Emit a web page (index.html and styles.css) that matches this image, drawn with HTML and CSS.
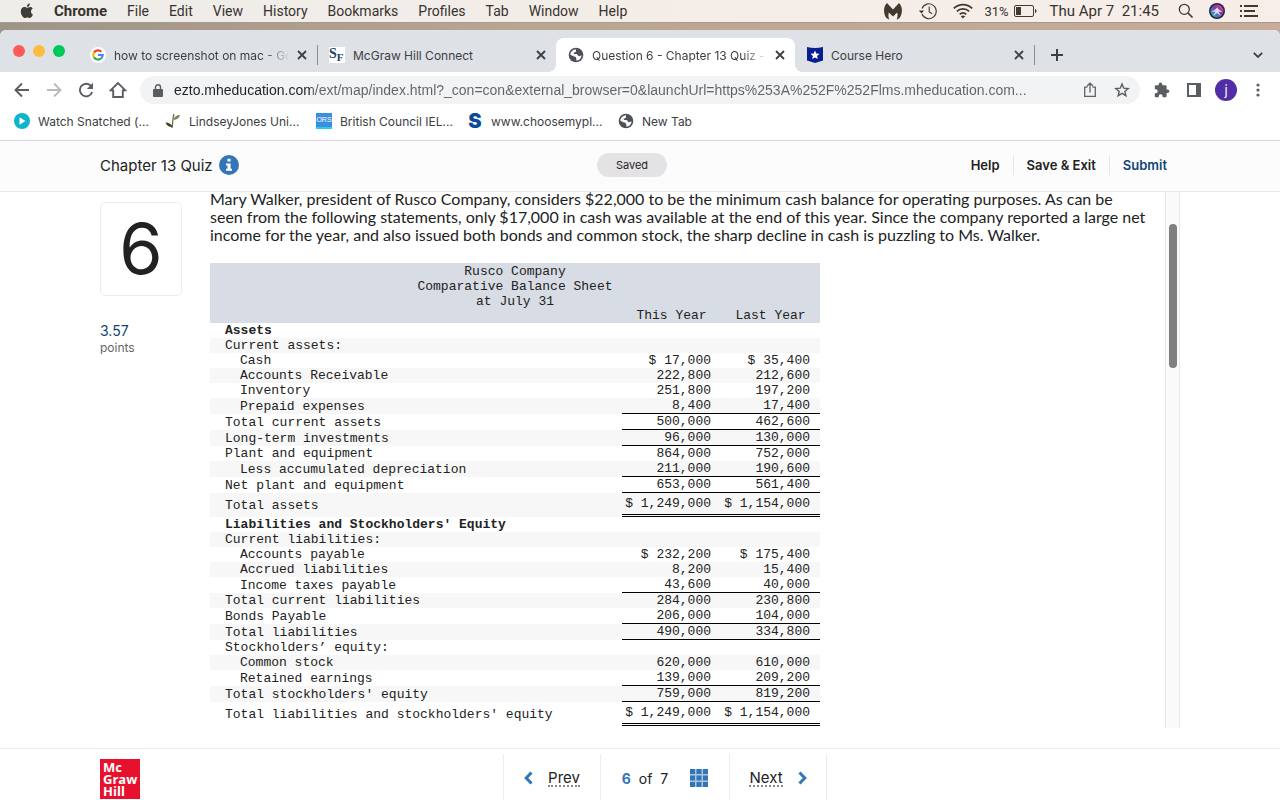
FILE: index.html
```html
<!DOCTYPE html>
<html lang="en">
<head>
  <meta charset="UTF-8">
  <title>Question 6 - Chapter 13 Quiz - Connect</title>
  <link rel="stylesheet" href="styles.css">
</head>
<body>

  <!-- mac menu bar -->
  <nav class="menubar">
    <svg class="apple" width="14" height="16" viewBox="0 0 14 16"><path d="M9.9.4c.1 1.9-1.300 3.500-3 3.400C6.700 2 8.200.5 9.900.4zM12.900 11.500c-.8 2-2 3.500-3.100 3.500-.9 0-1.300-.6-2.400-.6s-1.500.6-2.400.6C3.200 15 .8 11.600.8 8.400c0-2.700 1.700-4.300 3.500-4.300 1.200 0 2 .7 2.800.7.700 0 1.700-.8 3.100-.8.900 0 1.900.5 2.500 1.400-2.500 1.500-2.100 5 .2 6.100z" fill="#413c37"/></svg>
    <a href="#" class="app-name">Chrome</a>
    <a href="#">File</a>
    <a href="#">Edit</a>
    <a href="#">View</a>
    <a href="#">History</a>
    <a href="#">Bookmarks</a>
    <a href="#">Profiles</a>
    <a href="#">Tab</a>
    <a href="#">Window</a>
    <a href="#">Help</a>
    <div class="status">
      <svg width="20" height="18" viewBox="0 0 20 18"><path d="M4 1 10 7.500 16 1c3.800 3.600 3.800 10.400.6 15l-3 1.800c1.200-2.500 1.200-5 .6-7.300L10 14.500l-4.200-4c-.6 2.300-.6 4.800.6 7.300L3.400 16C.2 11.400.2 4.600 4 1z" fill="#43392f"/></svg>
      <svg width="20" height="18" viewBox="0 0 20 18" fill="none" stroke="#43392f" stroke-width="1.100"><path d="M4 6.500A7.400 7.400 0 1 1 4 12M11.200 4.500V10l3 1.800"/><path d="M.8 8.500h5.400L3.500 11.500z" fill="#43392f" stroke="none"/></svg>
      <svg width="20" height="16" viewBox="0 0 20 16" fill="none" stroke="#43392f" stroke-width="1.700"><path d="M.8 5.300c5.200-5 13.200-5 18.400 0M3.800 8.400c3.500-3.400 8.900-3.400 12.400 0M6.700 11.300c1.900-1.800 4.700-1.800 6.600 0"/><path d="m10 15.500-2.200-2.300c1.200-1.100 3.200-1.100 4.400 0z" fill="#43392f" stroke="none"/></svg>
      <span class="battery">31%
        <svg width="23" height="12" viewBox="0 0 23 12"><rect x=".5" y=".5" width="19" height="11" rx="1.500" fill="none" stroke="#43392f"/><path d="M2 2h5v8H2zM21 4c2 .5 2 3.500 0 4z" fill="#43392f"/></svg>
      </span>
      <span class="clock">Thu Apr 7&nbsp; 21:45</span>
      <svg width="16" height="16" viewBox="0 0 16 16" fill="none" stroke="#43392f" stroke-width="1.300"><circle cx="6.300" cy="6.300" r="5"/><path d="m10 10 4.500 4.500" stroke-width="1.700"/></svg>
      <svg width="16" height="16" viewBox="0 0 16 16">
        <defs><linearGradient id="siri" x1="1" y1="0" x2="0" y2="1"><stop offset="0" stop-color="#f0408f"/><stop offset=".45" stop-color="#7a3fa0"/><stop offset="1" stop-color="#1fc8d8"/></linearGradient></defs>
        <circle cx="8" cy="8" r="8" fill="#26213d"/><circle cx="8" cy="8" r="6.500" fill="url(#siri)"/><path d="M8 4.500c1.500 2 3 3 5.500 4-2 .5-3 .3-4 .3L12 13 8 10l-4 3 2.500-4.200c-1 0-2 .2-4-.3 2.500-1 4-2 5.500-4z" fill="#e9f6ff" opacity=".85"/>
      </svg>
      <svg width="18" height="12" viewBox="0 0 18 12" fill="#43392f"><path d="M0 0h2v2H0zM0 5h2v2H0zM0 10h2v2H0zM4 0h14v2H4zM4 5h11v2H4zM4 10h14v2H4z"/></svg>
    </div>
  </nav>

  <div class="desktop">
  <div class="window">
    <!-- tabs -->
    <div class="tabstrip">
      <div class="lights"><span class="red"></span><span class="yellow"></span><span class="green"></span></div>
      <div class="tab">
        <svg class="favicon" width="16" height="16" viewBox="0 0 16 16" fill="none" stroke-width="2.200"><circle cx="8" cy="8" r="8" fill="#fff"/><path d="M11.300 4.700A4.700 4.700 0 0 0 4 5.600" stroke="#ea4335"/><path d="M4 5.500a4.800 4.800 0 0 0 0 5" stroke="#fbbc05"/><path d="M4 10.400a4.700 4.700 0 0 0 7.100.9" stroke="#34a853"/><path d="M8 8h4.700a4.800 4.800 0 0 1-1.600 3.400" stroke="#4285f4"/></svg>
        <span class="tab-title fade">how to screenshot on mac - Goo</span>
        <button class="close" aria-label="Close tab"><svg width="10" height="10" viewBox="0 0 10 10"><path d="m1 1 8 8M9 1 1 9"/></svg></button>
      </div>
      <div class="tab divided">
        <span class="favicon sf">S<span>F</span></span>
        <span class="tab-title">McGraw Hill Connect</span>
        <button class="close" aria-label="Close tab"><svg width="10" height="10" viewBox="0 0 10 10"><path d="m1 1 8 8M9 1 1 9"/></svg></button>
      </div>
      <div class="tab active">
        <svg class="favicon" width="16" height="16" viewBox="0 0 16 16"><circle cx="8" cy="8" r="7.300" fill="#4d5156"/><path d="M8.200 2.300c-.6 1.200.3 1.700-.4 2.500-.9.800-2.100.4-2.200 1.500 0 1 1.600.6 2.800.8 1.600.3 1.200 2 2.600 2.100 1 .1 1.500-.7 2.600-.7-.3 3-2.500 5.100-5.300 5.300.6-1.400-.2-2-.2-2.900 0-1-1.500-1.400-2.700-1.700-1.300-.3-2-1-3.100-1.600C2.600 4.800 5 2.400 8.200 2.300z" fill="#fff"/></svg>
        <span class="tab-title fade">Question 6 - Chapter 13 Quiz -</span>
        <button class="close" aria-label="Close tab"><svg width="10" height="10" viewBox="0 0 10 10"><path d="m1 1 8 8M9 1 1 9"/></svg></button>
      </div>
      <div class="tab">
        <svg class="favicon" width="16" height="16" viewBox="0 0 16 16"><path d="M0 0q8 2 16 0v13.500l-8 2.500-8-2.500z" fill="#0a1f8f"/><path d="m8 3.600 1.300 2.900 3.200.3-2.400 2.100.7 3.100L8 10.400 5.200 12l.7-3.100-2.400-2.100 3.200-.3z" fill="#fff"/></svg>
        <span class="tab-title">Course Hero</span>
        <button class="close" aria-label="Close tab"><svg width="10" height="10" viewBox="0 0 10 10"><path d="m1 1 8 8M9 1 1 9"/></svg></button>
      </div>
      <button class="newtab divided" aria-label="New tab"><svg width="12" height="12" viewBox="0 0 12 12"><path d="M6 0v12M0 6h12" stroke="#3c4043" stroke-width="2"/></svg></button>
      <button class="tabsearch" aria-label="Search tabs"><svg width="10" height="6" viewBox="0 0 10 6" fill="none"><path d="m.8.8 4.200 4.200L9.200.8" stroke="#3c4043" stroke-width="1.800"/></svg></button>
    </div>

    <!-- toolbar -->
    <div class="toolbar">
      <button aria-label="Back"><svg width="16" height="16" viewBox="0 0 16 16" fill="none" stroke="#5a5e63" stroke-width="1.900"><path d="M15 8H2M8 1.500 1.500 8 8 14.500"/></svg></button>
      <button aria-label="Forward"><svg width="16" height="16" viewBox="0 0 16 16" fill="none" stroke="#b9bbbe" stroke-width="1.900"><path d="M1 8h13M8 1.500 14.500 8 8 14.500"/></svg></button>
      <button aria-label="Reload"><svg width="16" height="16" viewBox="0 0 16 16"><path d="M13.200 4.200A6.300 6.300 0 1 0 14.200 10" fill="none" stroke="#5a5e63" stroke-width="1.900"/><path d="M15 .8V7H8.800z" fill="#5a5e63"/></svg></button>
      <button aria-label="Home"><svg width="18" height="18" viewBox="0 0 18 18" fill="none" stroke="#5a5e63" stroke-width="1.900"><path d="M1.600 9.400 9 2l7.400 7.400h-2.600V16H4.200V9.400z"/></svg></button>
      <div class="omnibox">
        <svg width="10" height="13" viewBox="0 0 10 13"><path d="M1 5h8q1 0 1 1v6q0 1-1 1H1q-1 0-1-1V6q0-1 1-1z" fill="#5a5e63"/><path d="M2.500 5.500V3.300a2.500 2.500 0 0 1 5 0v2.200" fill="none" stroke="#5a5e63" stroke-width="1.400"/></svg>
        <input type="text" aria-label="Address" value="ezto.mheducation.com/ext/map/index.html?_con=con&amp;external_browser=0&amp;launchUrl=https%253A%252F%252Flms.mheducation.com...">
        <button aria-label="Share"><svg width="14" height="16" viewBox="0 0 14 16" fill="none" stroke="#5f6368" stroke-width="1.300"><path d="M4.500 5.200H1.700v9.100h10.600V5.200H9.500M7 10.500V1.500M4 4l3-2.800L10 4"/></svg></button>
        <button aria-label="Bookmark"><svg width="16" height="16" viewBox="0 0 16 16" fill="none" stroke="#5a5e63" stroke-width="1.400"><path d="m8 2 1.700 4.100 4.500.4-3.400 2.900 1.100 4.400L8 11.400l-3.900 2.400 1.100-4.400-3.400-2.900 4.500-.4z"/></svg></button>
      </div>
      <button aria-label="Extensions"><svg width="16" height="16" viewBox="0 0 16 16"><path d="M13.600 7.500h-1V4.600c0-.8-.6-1.400-1.400-1.400H8.300v-1a1.800 1.800 0 0 0-3.600 0v1H1.900C1.100 3.200.8 3.800.8 4.600v2.700h1a1.900 1.900 0 0 1 0 3.900h-1v2.700c0 .8.500 1.400 1.300 1.400h2.600v-1a1.900 1.900 0 0 1 3.900 0v1h2.600c.8 0 1.400-.6 1.400-1.400v-2.800h1a1.800 1.800 0 0 0 0-3.600z" fill="#5a5e63"/></svg></button>
      <button aria-label="Side panel"><svg width="14" height="14" viewBox="0 0 14 14"><path d="M0 0h14v14H0zM2 2v10h7V2z" fill="#5a5e63" fill-rule="evenodd"/></svg></button>
      <button class="avatar" aria-label="Profile">j</button>
      <button aria-label="Menu"><svg width="4" height="14" viewBox="0 0 4 14" fill="#5a5e63"><circle cx="2" cy="2" r="1.600"/><circle cx="2" cy="7" r="1.600"/><circle cx="2" cy="12" r="1.600"/></svg></button>
    </div>

    <!-- bookmarks -->
    <div class="bookmarks">
      <a href="#"><svg width="16" height="16" viewBox="0 0 16 16"><circle cx="8" cy="8" r="8" fill="#0cb5c9"/><path d="m5.500 4.300 6 3.700-6 3.700z" fill="#fff"/></svg>Watch Snatched (...</a>
      <a href="#"><svg width="16" height="16" viewBox="0 0 16 16"><path d="M7 15C8 10 7.500 5 9 1" fill="none" stroke="#5d6a3a" stroke-width="1.200"/><path d="M8.500 7C9 3.500 12 2 15 2c-.5 3-3 4.500-6.500 5z" fill="#7c8a4e"/><path d="M7.500 14C5.500 14.500 1.500 13 .5 9.500c3.500 0 6 1.500 7 4.500z" fill="#34452a"/></svg>LindseyJones Uni...</a>
      <a href="#"><span class="ors">ORS</span>British Council IEL...</a>
      <a href="#"><span class="bigs">S</span>www.choosemypl...</a>
      <a href="#"><svg width="16" height="16" viewBox="0 0 16 16"><circle cx="8" cy="8" r="7.300" fill="#4d5156"/><path d="M8.200 2.300c-.6 1.200.3 1.700-.4 2.500-.9.800-2.100.4-2.200 1.500 0 1 1.600.6 2.800.8 1.600.3 1.200 2 2.600 2.100 1 .1 1.500-.7 2.600-.7-.3 3-2.500 5.100-5.300 5.300.6-1.400-.2-2-.2-2.900 0-1-1.500-1.400-2.700-1.700-1.300-.3-2-1-3.100-1.600C2.600 4.800 5 2.400 8.200 2.300z" fill="#fff"/></svg>New Tab</a>
    </div>

    <!-- quiz page -->
    <header class="quiz-header">
      <div class="inner">
        <div class="quiz-title">Chapter 13 Quiz
          <button class="info" aria-label="Quiz info"><svg width="20" height="20" viewBox="0 0 20 20"><circle cx="10" cy="10" r="10" fill="#3376b8"/><path d="M8.400 3.800h3.200v2.800H8.400zM7 8.400h4.600v5.400H13v2H7v-2h1.500v-3.400H7z" fill="#fff"/></svg></button>
        </div>
        <span class="saved">Saved</span>
        <div class="actions">
          <button>Help</button>
          <button>Save &amp; Exit</button>
          <button class="submit">Submit</button>
        </div>
      </div>
    </header>

    <main class="quiz-body">
      <aside>
        <div class="qnum">6</div>
        <div class="score">3.57</div>
        <div class="points">points</div>
      </aside>
      <section class="question">
        <p>Mary Walker, president of Rusco Company, considers $22,000 to be the minimum cash balance for operating purposes. As can be<br>
        seen from the following statements, only $17,000 in cash was available at the end of this year. Since the company reported a large net<br>
        income for the year, and also issued both bonds and common stock, the sharp decline in cash is puzzling to Ms. Walker.</p>
        <table>
          <thead>
            <tr><th colspan="3">Rusco Company<br>Comparative Balance Sheet<br>at July 31</th></tr>
            <tr><th></th><th class="year">This Year</th><th class="year">Last Year</th></tr>
          </thead>
          <tbody>
            <tr><td><b>Assets</b></td><td></td><td></td></tr>
            <tr><td>Current assets:</td><td></td><td></td></tr>
            <tr><td class="sub">Cash</td><td>$ 17,000</td><td>$ 35,400</td></tr>
            <tr><td class="sub">Accounts Receivable</td><td>222,800</td><td>212,600</td></tr>
            <tr><td class="sub">Inventory</td><td>251,800</td><td>197,200</td></tr>
            <tr class="line"><td class="sub">Prepaid expenses</td><td>8,400</td><td>17,400</td></tr>
            <tr class="line"><td>Total current assets</td><td>500,000</td><td>462,600</td></tr>
            <tr class="line"><td>Long-term investments</td><td>96,000</td><td>130,000</td></tr>
            <tr><td>Plant and equipment</td><td>864,000</td><td>752,000</td></tr>
            <tr class="line"><td class="sub">Less accumulated depreciation</td><td>211,000</td><td>190,600</td></tr>
            <tr class="line"><td>Net plant and equipment</td><td>653,000</td><td>561,400</td></tr>
            <tr class="total"><td>Total assets</td><td>$ 1,249,000</td><td>$ 1,154,000</td></tr>
            <tr><td><b>Liabilities and Stockholders' Equity</b></td><td></td><td></td></tr>
            <tr><td>Current liabilities:</td><td></td><td></td></tr>
            <tr><td class="sub">Accounts payable</td><td>$ 232,200</td><td>$ 175,400</td></tr>
            <tr><td class="sub">Accrued liabilities</td><td>8,200</td><td>15,400</td></tr>
            <tr class="line"><td class="sub">Income taxes payable</td><td>43,600</td><td>40,000</td></tr>
            <tr><td>Total current liabilities</td><td>284,000</td><td>230,800</td></tr>
            <tr class="line"><td>Bonds Payable</td><td>206,000</td><td>104,000</td></tr>
            <tr class="line"><td>Total liabilities</td><td>490,000</td><td>334,800</td></tr>
            <tr><td>Stockholders’ equity:</td><td></td><td></td></tr>
            <tr><td class="sub">Common stock</td><td>620,000</td><td>610,000</td></tr>
            <tr class="line"><td class="sub">Retained earnings</td><td>139,000</td><td>209,200</td></tr>
            <tr class="line"><td>Total stockholders' equity</td><td>759,000</td><td>819,200</td></tr>
            <tr class="total"><td>Total liabilities and stockholders' equity</td><td>$ 1,249,000</td><td>$ 1,154,000</td></tr>
          </tbody>
        </table>
      </section>
      <div class="scrollbar"><div class="thumb"></div></div>
    </main>

    <footer class="quiz-footer">
      <div class="inner">
        <div class="mgh">Mc<br>Graw<br>Hill</div>
        <div class="pager">
          <button><svg width="9" height="14" viewBox="0 0 9 14" fill="none"><path d="M7.500 1.500 2.200 7l5.300 5.500" stroke="#3376b8" stroke-width="3"/></svg><span class="dotted">Prev</span></button>
          <div class="count"><b>6</b><span>of</span><span>7</span>
            <button class="grid" aria-label="All questions"><svg width="18" height="18" viewBox="0 0 18 18"><path d="M0 0h18v18H0z" fill="#a9c6e2"/><path d="M0 0h5v5H0zM6.500 0h5v5h-5zM13 0h5v5h-5zM0 6.500h5v5H0zM6.500 6.500h5v5h-5zM13 6.500h5v5h-5zM0 13h5v5H0zM6.500 13h5v5h-5zM13 13h5v5h-5z" fill="#3376b8"/></svg></button>
          </div>
          <button><span class="dotted">Next</span><svg width="9" height="14" viewBox="0 0 9 14" fill="none"><path d="M1.500 1.500 6.800 7l-5.300 5.500" stroke="#3376b8" stroke-width="3"/></svg></button>
        </div>
      </div>
    </footer>
  </div>
  </div>

</body>
</html>
```
FILE: styles.css
```css
* {
  box-sizing: border-box;
}
body {
  margin: 0;
  height: 100vh;
  display: flex;
  flex-direction: column;
  font-family: Inter, "Liberation Sans", sans-serif;
  color: #222;
  overflow: hidden;
}
button {
  border: 0;
  padding: 0;
  background: none;
  font: inherit;
  color: inherit;
  cursor: pointer;
}
a {
  color: inherit;
  text-decoration: none;
}
svg {
  flex-shrink: 0;
}

/* menu bar */
.menubar {
  display: flex;
  align-items: center;
  gap: 20px;
  height: 23px;
  flex-shrink: 0;
  padding: 0 22px 0 20px;
  font-family: Roboto, sans-serif;
  font-size: 14px;
  color: #37332f;
  background: linear-gradient(90deg, #eeede9, #f3ede8 40%, #f7eee9);
  border-bottom: 1px solid #a89a90;
}
.app-name {
  font-size: 15px;
  font-weight: 700;
}
.status {
  display: flex;
  align-items: center;
  gap: 15px;
  margin-left: auto;
}
.battery {
  display: flex;
  align-items: center;
  gap: 5px;
  margin: 0 -2px 0 -4px;
  font-size: 13px;
}
.clock {
  margin-right: 4px;
  font-size: 15px;
}

/* window */
.desktop {
  flex: 1;
  min-height: 0;
  padding-top: 7px;
  background: linear-gradient(90deg, #9d9488, #b9a592 40%, #c8ab9b);
}
.window {
  height: 100%;
  display: flex;
  flex-direction: column;
  background: #fff;
  border-radius: 6px 6px 0 0;
  overflow: hidden;
}
.tabstrip {
  display: flex;
  height: 42px;
  flex-shrink: 0;
  padding: 8px 13px 0 13px;
  background: #dee1e6;
}
.lights {
  display: flex;
  gap: 8px;
  width: 65px;
  padding-top: 7px;
}
.lights span {
  width: 12px;
  height: 12px;
  border-radius: 50%;
}
.red { background: #fc5b57; }
.yellow { background: #fdbc40; }
.green { background: #00ca56; }

.tab {
  position: relative;
  display: flex;
  align-items: center;
  gap: 8px;
  flex: 0 1 239px;
  min-width: 0;
  padding: 0 10px 0 12px;
  font-size: 12px;
  color: #3c4043;
}
.tab.active {
  background: #fff;
  border-radius: 8px 8px 0 0;
}
.tab.active::before,
.tab.active::after {
  content: "";
  position: absolute;
  bottom: 0;
  width: 8px;
  height: 8px;
}
.tab.active::before {
  left: -8px;
  background: radial-gradient(circle at 0 0, #dee1e6 8px, #fff 8px);
}
.tab.active::after {
  right: -8px;
  background: radial-gradient(circle at 100% 0, #dee1e6 8px, #fff 8px);
}
.divided {
  background: linear-gradient(#8b8f94, #8b8f94) left center / 1px 20px no-repeat;
}
.tab-title {
  flex: 1;
  overflow: hidden;
  white-space: nowrap;
}
.fade {
  -webkit-mask-image: linear-gradient(90deg, #000 150px, transparent 176px);
  mask-image: linear-gradient(90deg, #000 150px, transparent 176px);
}
.close {
  display: flex;
  stroke: #3c4043;
  stroke-width: 1.8px;
}
.sf {
  width: 16px;
  height: 16px;
  background: #fff;
  color: #1d3f66;
  font: bold 14px/14px "Liberation Serif", serif;
}
.sf span {
  font-size: 11px;
  vertical-align: -3px;
}
.newtab {
  width: 46px;
  height: 34px;
}
.tabsearch {
  display: flex;
  align-items: center;
  justify-content: center;
  width: 18px;
  height: 34px;
  margin-left: auto;
}

/* toolbar */
.toolbar {
  display: flex;
  align-items: center;
  height: 36px;
  flex-shrink: 0;
  padding: 0 6px;
}
.toolbar button {
  display: flex;
  align-items: center;
  justify-content: center;
  width: 32px;
  height: 28px;
}
.omnibox {
  display: flex;
  align-items: center;
  flex: 1;
  height: 28px;
  margin: 0 6px;
  padding: 0 2px 0 13px;
  background: #f1f3f4;
  border-radius: 14px;
}
.omnibox input {
  flex: 1;
  min-width: 0;
  border: 0;
  padding: 0 0 0 11px;
  outline: 0;
  font: 14px "Liberation Sans", sans-serif;
  color: #5f6368;
  /* host is darker than the path */
  background: linear-gradient(90deg, #202124 149px, #5f6368 149px);
  -webkit-background-clip: text;
  background-clip: text;
  -webkit-text-fill-color: transparent;
}
.toolbar .avatar {
  width: 22px;
  height: 22px;
  margin: 0 5px;
  border-radius: 50%;
  background: #512da8;
  color: #fff;
  font-size: 13px;
}

/* bookmarks */
.bookmarks {
  display: flex;
  height: 33px;
  flex-shrink: 0;
  padding: 0 14px 6px;
  border-bottom: 1px solid #d5d7da;
  font-size: 12px;
  color: #3c4043;
}
.bookmarks a {
  display: flex;
  align-items: center;
  gap: 8px;
  width: 151px;
  white-space: nowrap;
}
.ors {
  width: 16px;
  height: 16px;
  background: #3b8ede;
  border-bottom: 2px solid #22d3e8;
  color: #fff;
  text-align: center;
  font: 7px/14px "Liberation Sans", sans-serif;
}
.bigs {
  width: 16px;
  color: #0b4a94;
  text-align: center;
  font: 900 20px/16px Inter, sans-serif;
}

/* quiz header */
.inner {
  display: flex;
  align-items: center;
  width: 100%;
  max-width: 1080px;
  height: 100%;
  margin: 0 auto;
}
.quiz-header {
  height: 51px;
  flex-shrink: 0;
  padding-bottom: 2px;
  background: #fcfcfc;
  border-bottom: 1px solid #eaeaea;
}
.quiz-title,
.actions {
  flex: 1;
  display: flex;
  align-items: center;
  font-size: 15px;
}
.info {
  display: flex;
  margin-left: 6px;
}
.saved {
  margin-right: 16px;
  padding: 0 19px;
  border-radius: 12px;
  background: #e4e2e5;
  font-size: 11px;
  line-height: 24px;
}
.actions {
  justify-content: flex-end;
  font-size: 13px;
  font-weight: 600;
}
.actions button {
  height: 20px;
  padding: 0 13px;
  border-left: 1px solid #e6e6e6;
}
.actions button:first-child {
  border-left: 0;
}
.actions .submit {
  color: #124478;
}

/* question */
.quiz-body {
  display: flex;
  flex: 1;
  min-height: 0;
  width: 100%;
  max-width: 1080px;
  margin: 0 auto;
}
aside {
  width: 110px;
  flex-shrink: 0;
  padding-top: 10px;
}
.qnum {
  width: 82px;
  height: 94px;
  margin-bottom: 26px;
  border: 1px solid #ececec;
  border-radius: 5px;
  text-align: center;
  font-size: 70px;
  line-height: 92px;
}
.score {
  color: #124478;
  font-size: 14px;
  line-height: 18px;
}
.points {
  color: #666;
  font-size: 12px;
  line-height: 16px;
}
.question {
  flex: 1;
  min-width: 0;
  overflow: hidden;
}
/* already scrolled a little under the header */
.question p {
  margin: -2px 0 19px;
  font: 16px/18px Lato, sans-serif;
  white-space: nowrap;
}
table {
  width: 610px;
  border-spacing: 0;
  font: 13px/15px "Liberation Mono", monospace;
}
th, td {
  padding: 1px 0 0;
  font-weight: 400;
}
thead {
  background: #d8dce4;
}
thead tr + tr th {
  padding-top: 0;
  line-height: 14px;
}
.year {
  width: 99px;
}
td {
  height: 15px;
  line-height: 14px;
  text-align: right;
  padding-right: 10px;
}
td:first-child {
  text-align: left;
  padding-left: 15px;
}
td.sub:first-child {
  padding-left: 30px;
}
tbody tr:nth-child(even) {
  background: #f7f7f7;
}
.line td + td {
  border-bottom: 1px solid #000;
}
.total td {
  height: 24px;
}
.total td + td {
  border-bottom: 3px double #000;
}
.scrollbar {
  width: 15px;
  padding: 32px 3px 0;
  border: solid #e8e8e8;
  border-width: 0 1px;
  background: #fafafa;
}
.thumb {
  width: 8px;
  height: 144px;
  border-radius: 4px;
  background: #7f7f7f;
}

/* footer */
.quiz-footer {
  height: 52px;
  flex-shrink: 0;
  margin-top: 20px;
  border-top: 1px solid #eeeeee;
}
.mgh {
  width: 40px;
  height: 40px;
  margin-top: 9px;
  padding: 2px 3px;
  background: #e8112d;
  color: #fff;
  font: bold 13px/12px "Open Sans", sans-serif;
}
.quiz-footer .inner {
  display: grid;
  grid-template-columns: 1fr auto 1fr;
}
.pager {
  display: flex;
  height: 46px;
  margin: 5px 0 0 50px;
  border-left: 1px solid #eeeeee;
  font-size: 15px;
}
.pager > * {
  display: flex;
  align-items: center;
  justify-content: center;
  gap: 15px;
  width: 97px;
  padding-top: 2px;
  border-right: 1px solid #eeeeee;
}
.pager .count {
  width: 129px;
  gap: 8px;
  font-size: 14px;
}
.count b {
  color: #3376b8;
}
.grid {
  display: flex;
  margin-left: 14px;
}
.dotted {
  border-bottom: 2px dotted #888;
  line-height: 15px;
}
```
